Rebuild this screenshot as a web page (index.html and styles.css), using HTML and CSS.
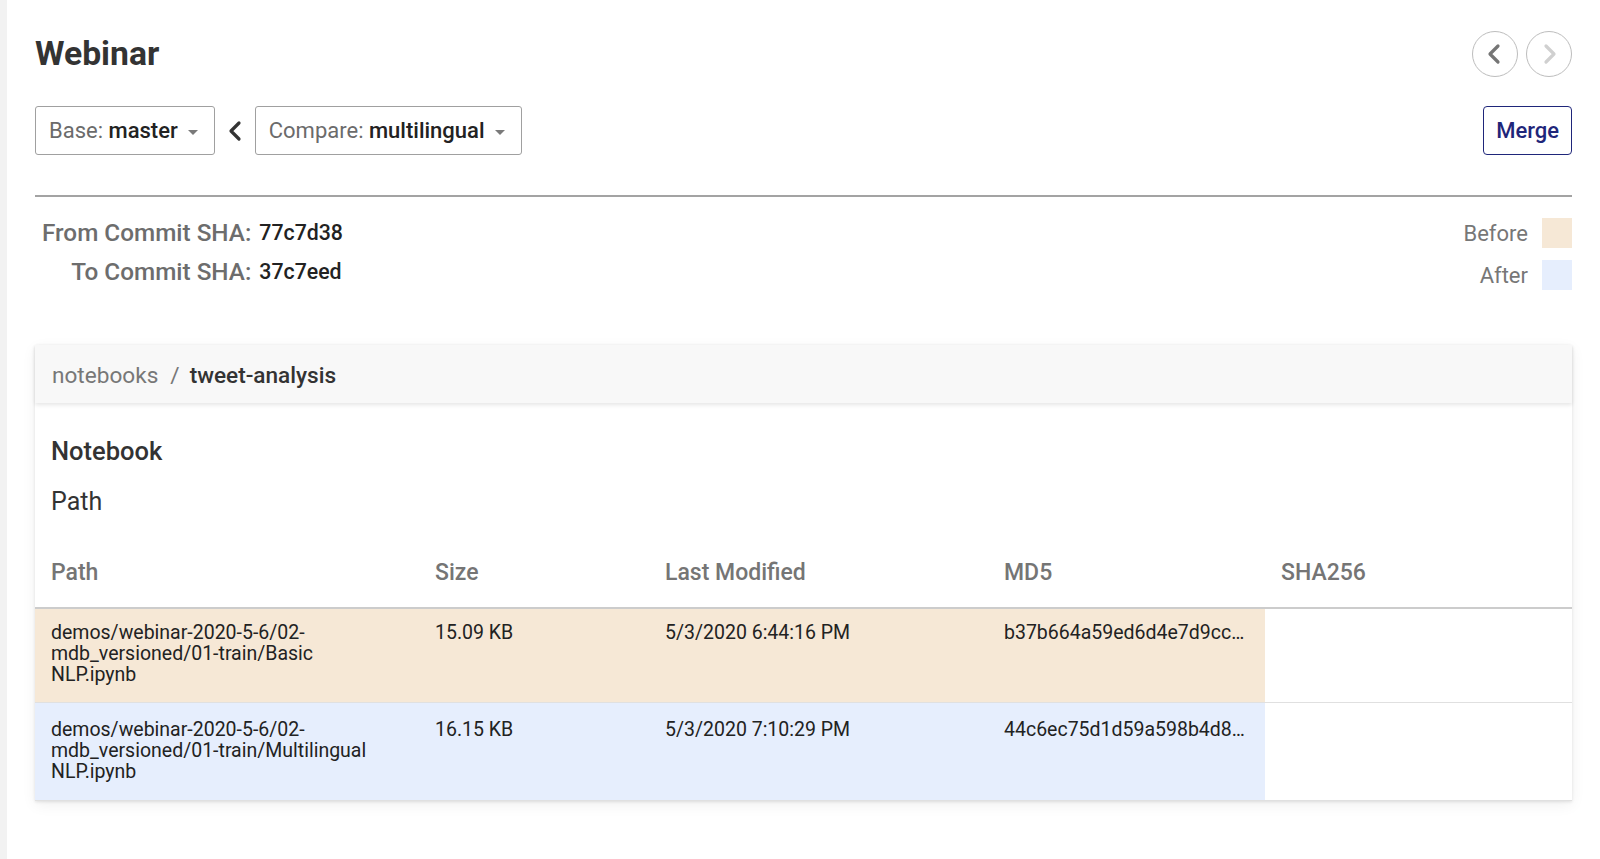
FILE: index.html
```html
<!DOCTYPE html>
<html lang="en">
<head>
<meta charset="utf-8">
<title>Webinar</title>
<link rel="stylesheet" href="styles.css">
</head>
<body>
<div class="app">
  <main class="main">
    <header class="title-row">
      <h1 class="title">Webinar</h1>
      <div class="pager">
        <button class="circle">
          <svg width="20" height="24" viewBox="0 0 20 24"><polyline points="13,4 5,12 13,20" fill="none" stroke="#757575" stroke-width="3.2" stroke-linecap="round" stroke-linejoin="round"/></svg>
        </button>
        <button class="circle">
          <svg width="20" height="24" viewBox="0 0 20 24"><polyline points="7,4 15,12 7,20" fill="none" stroke="#d0d0d0" stroke-width="3.2" stroke-linecap="round" stroke-linejoin="round"/></svg>
        </button>
      </div>
    </header>

    <div class="branch-row">
      <div class="branches">
        <div class="select"><span class="sel-label">Base:</span>&nbsp;<span class="sel-value">master</span><span class="caret"></span></div>
        <svg class="arrow-left" width="14" height="22" viewBox="0 0 14 22"><polyline points="11,3 3,11 11,19" fill="none" stroke="#333" stroke-width="3.2" stroke-linecap="round" stroke-linejoin="round"/></svg>
        <div class="select"><span class="sel-label">Compare:</span>&nbsp;<span class="sel-value">multilingual</span><span class="caret"></span></div>
      </div>
      <button class="merge">Merge</button>
    </div>

    <hr class="divider">

    <section class="commits">
      <div class="sha-grid">
        <span class="sha-label">From Commit SHA:</span><span class="sha-value">77c7d38</span>
        <span class="sha-label">To Commit SHA:</span><span class="sha-value">37c7eed</span>
      </div>
      <div class="legend">
        <div class="legend-item"><span>Before</span><span class="swatch before"></span></div>
        <div class="legend-item"><span>After</span><span class="swatch after"></span></div>
      </div>
    </section>

    <section class="card">
      <div class="crumbs">
        <span class="crumb">notebooks</span><span class="crumb-sep">/</span><span class="crumb-current">tweet-analysis</span>
      </div>
      <div class="card-body">
        <h2 class="card-title">Notebook</h2>
        <h3 class="card-sub">Path</h3>
        <table class="diff-table">
          <colgroup>
            <col class="c-path"><col class="c-size"><col class="c-date"><col class="c-md5"><col>
          </colgroup>
          <thead>
            <tr><th>Path</th><th>Size</th><th>Last Modified</th><th>MD5</th><th>SHA256</th></tr>
          </thead>
          <tbody>
            <tr class="row-before">
              <td class="path">demos/webinar-2020-5-6/02-mdb_versioned/01-train/Basic NLP.ipynb</td>
              <td>15.09 KB</td>
              <td>5/3/2020 6:44:16 PM</td>
              <td class="md5">b37b664a59ed6d4e7d9cc3f81a0e25d4</td>
              <td class="sha"></td>
            </tr>
            <tr class="row-after">
              <td class="path">demos/webinar-2020-5-6/02-mdb_versioned/01-train/Multilingual NLP.ipynb</td>
              <td>16.15 KB</td>
              <td>5/3/2020 7:10:29 PM</td>
              <td class="md5">44c6ec75d1d59a598b4d8e2f07c91ab3</td>
              <td class="sha"></td>
            </tr>
          </tbody>
        </table>
      </div>
    </section>
  </main>
</div>
</body>
</html>
```

FILE: styles.css
```css
* { box-sizing: border-box; }

html, body {
  margin: 0;
  padding: 0;
  background: #ffffff;
  font-family: Roboto, "Noto Sans", "Liberation Sans", sans-serif;
  color: #333333;
}

.app {
  min-height: 100vh;
  border-left: 7px solid #f2f2f2;
}

.main {
  padding: 31px 28px 40px 28px;
}

/* title row */
.title-row {
  display: flex;
  align-items: center;
  justify-content: space-between;
  height: 46px;
}

.title {
  margin: 0;
  font-size: 33.7px;
  font-weight: 700;
  line-height: 38px;
  color: #333333;
}

.pager {
  display: flex;
  gap: 8px;
}

.circle {
  width: 46px;
  height: 46px;
  border-radius: 50%;
  border: 1.5px solid #bdbdbd;
  background: #ffffff;
  padding: 0;
  display: flex;
  align-items: center;
  justify-content: center;
}

/* branch row */
.branch-row {
  margin-top: 29px;
  display: flex;
  align-items: center;
  justify-content: space-between;
}

.branches {
  display: flex;
  align-items: center;
  gap: 13px;
}

.select {
  height: 49px;
  display: flex;
  align-items: center;
  padding: 0 16px 0 13px;
  border: 1px solid #a0a0a0;
  border-radius: 3px;
  font-size: 22px;
}

.sel-label { color: #6b6b6b; }
.sel-value { color: #222222; font-weight: 500; }

.caret {
  width: 0;
  height: 0;
  margin-left: 10px;
  margin-top: 3px;
  border-left: 5px solid transparent;
  border-right: 5px solid transparent;
  border-top: 5px solid #7a7a7a;
}

.merge {
  height: 49px;
  padding: 0 12px;
  border: 1.5px solid #1f267a;
  border-radius: 4px;
  background: #ffffff;
  color: #1f267a;
  font-family: inherit;
  font-size: 22px;
  font-weight: 500;
}

.divider {
  margin: 40px 0 0 0;
  border: 0;
  height: 2px;
  background: #a3a3a3;
}

/* commits */
.commits {
  margin-top: 16px;
  display: flex;
  justify-content: space-between;
  align-items: flex-start;
}

.sha-grid {
  display: grid;
  grid-template-columns: auto auto;
  column-gap: 8px;
  margin-left: 7px;
  line-height: 39px;
}

.sha-label {
  text-align: right;
  font-size: 24.3px;
  font-weight: 500;
  color: #6d6d6d;
}

.sha-value {
  font-size: 21.3px;
  font-weight: 500;
  color: #222222;
}

.legend {
  padding-top: 5px;
  display: flex;
  flex-direction: column;
  gap: 12px;
}

.legend-item {
  display: flex;
  justify-content: flex-end;
  align-items: center;
  gap: 14px;
  font-size: 22px;
  color: #777777;
}

.swatch {
  width: 30px;
  height: 30px;
}

.swatch.before { background: #f6e8d6; }
.swatch.after { background: #e6eefd; }

/* card */
.card {
  margin-top: 54px;
  background: #ffffff;
  box-shadow: 0 1px 3px rgba(0,0,0,0.10), 0 4px 14px rgba(0,0,0,0.06);
}

.crumbs {
  position: relative;
  z-index: 1;
  height: 58px;
  display: flex;
  align-items: center;
  padding: 3px 0 0 17px;
  background: #f8f8f8;
  box-shadow: 0 2px 4px rgba(0,0,0,0.10);
  font-size: 22.6px;
}

.crumb { color: #777777; }
.crumb-sep { color: #777777; margin: 0 10px 0 12px; }
.crumb-current { color: #333333; font-weight: 500; }

.card-body {
  padding-top: 34px;
}

.card-title {
  margin: 0 0 0 16px;
  font-size: 25.5px;
  line-height: 28px;
  font-weight: 500;
  color: #333333;
}

.card-sub {
  margin: 22px 0 0 16px;
  font-size: 25px;
  line-height: 29px;
  font-weight: 400;
  color: #333333;
}

.diff-table {
  margin-top: 20px;
  width: 100%;
  border-collapse: collapse;
  table-layout: fixed;
}

.c-path { width: 384px; }
.c-size { width: 230px; }
.c-date { width: 339px; }
.c-md5 { width: 277px; }

.diff-table th {
  text-align: left;
  font-size: 23px;
  line-height: 26px;
  font-weight: 500;
  color: #757575;
  padding: 24px 16px 21px 16px;
  border-bottom: 2px solid #cccccc;
}

.diff-table td {
  vertical-align: top;
  font-size: 19.5px;
  line-height: 21px;
  color: #222222;
  padding: 13px 16px 17px 16px;
  border-bottom: 1px solid #e0e0e0;
}

.row-after td {
  padding-top: 16px;
  padding-bottom: 18px;
}

.diff-table td.path {
  padding-right: 30px;
}

.diff-table td.md5 {
  white-space: nowrap;
  overflow: hidden;
  text-overflow: ellipsis;
}

.row-before td { background: #f6e8d6; }
.row-after td { background: #e6eefd; }
.diff-table td.sha { background: #ffffff; }
```
